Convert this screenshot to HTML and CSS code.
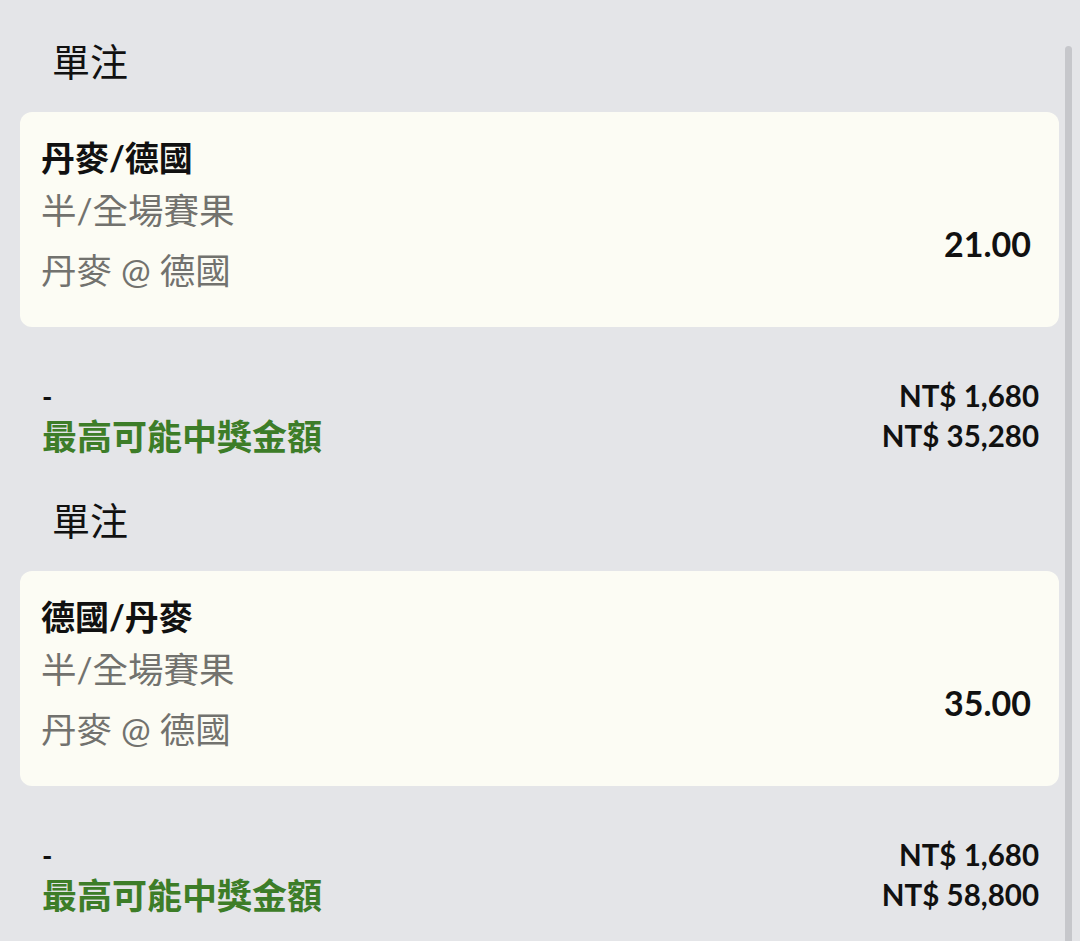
FILE: index.html
```html
<!DOCTYPE html>
<html lang="zh-Hant">
<head>
  <meta charset="UTF-8">
  <meta name="viewport" content="width=device-width, initial-scale=1.0">
  <title>投注單</title>
  <link rel="stylesheet" href="styles.css">
</head>
<body>
  <main class="slip">
    <section class="bet">
      <h2 class="bet-type">單注</h2>
      <div class="card">
        <div class="selection">丹麥/德國</div>
        <div class="card-row">
          <div class="market">
            <div class="market-name">半/全場賽果</div>
            <div class="event">丹麥 @ 德國</div>
          </div>
          <div class="odds">21.00</div>
        </div>
      </div>
      <div class="summary">
        <div class="labels">
          <div class="stake-label">-</div>
          <div class="win-label">最高可能中獎金額</div>
        </div>
        <div class="amounts">
          <div>NT$ 1,680</div>
          <div>NT$ 35,280</div>
        </div>
      </div>
    </section>

    <section class="bet">
      <h2 class="bet-type">單注</h2>
      <div class="card">
        <div class="selection">德國/丹麥</div>
        <div class="card-row">
          <div class="market">
            <div class="market-name">半/全場賽果</div>
            <div class="event">丹麥 @ 德國</div>
          </div>
          <div class="odds">35.00</div>
        </div>
      </div>
      <div class="summary">
        <div class="labels">
          <div class="stake-label">-</div>
          <div class="win-label">最高可能中獎金額</div>
        </div>
        <div class="amounts">
          <div>NT$ 1,680</div>
          <div>NT$ 58,800</div>
        </div>
      </div>
    </section>
  </main>
  <div class="scrollbar"></div>
</body>
</html>
```

FILE: styles.css
```css
body {
  margin: 0;
  background-color: #e4e5e8;
  color: #111;
  font-family: Lato, "Noto Sans CJK TC", sans-serif;
  overflow: hidden;
}
.slip {
  padding: 42px 21px 0 20px;
}
.bet {
  margin-bottom: 45px;
}
.bet-type {
  margin: 0 0 32px 32px;
  font-size: 38px;
  line-height: 38px;
  font-weight: 400;
}
.card {
  background-color: #fcfcf4;
  border-radius: 12px;
  padding: 29px 28px 39px 21px;
}
.selection {
  font-size: 34px;
  line-height: 34px;
  font-weight: 700;
  margin-bottom: 18px;
}
.card-row {
  display: flex;
  justify-content: space-between;
  align-items: center;
}
.market {
  color: #72726e;
  font-size: 35.5px;
  line-height: 35px;
}
.market-name {
  margin-bottom: 25px;
}
.odds {
  font-size: 34px;
  font-weight: 700;
  padding-top: 6px;
}
.summary {
  display: flex;
  justify-content: space-between;
  margin-top: 49px;
  padding: 0 20px 0 22px;
}
.stake-label {
  font-size: 28px;
  line-height: 40px;
  font-weight: 700;
}
.win-label {
  color: #3d7d28;
  font-size: 35px;
  line-height: 40px;
  font-weight: 700;
}
.amounts {
  text-align: right;
  font-size: 29.5px;
  line-height: 40px;
  font-weight: 700;
}
.scrollbar {
  position: fixed;
  top: 46px;
  bottom: 0;
  left: 1065px;
  width: 7px;
  background-color: #c6c7cb;
  border-radius: 4px 4px 0 0;
}
```
